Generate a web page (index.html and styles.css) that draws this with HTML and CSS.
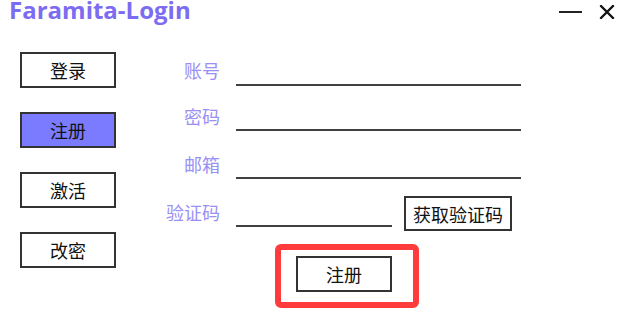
FILE: index.html
```html
<!DOCTYPE html>
<html lang="zh-CN">
<head>
<meta charset="utf-8">
<title>Faramita-Login</title>
<link rel="stylesheet" href="styles.css">
</head>
<body>
<div class="window">
  <header class="titlebar">
    <div class="title">Faramita-Login</div>
    <div class="controls">
      <svg class="ctl-min" width="23" height="4" viewBox="0 0 23 4"><line x1="0" y1="2" x2="23" y2="2" stroke="#222" stroke-width="2"/></svg>
      <svg class="ctl-close" width="16" height="14" viewBox="0 0 16 14"><path d="M2 1 L14 13 M14 1 L2 13" stroke="#111" stroke-width="2.4" stroke-linecap="round"/></svg>
    </div>
  </header>
  <main class="main">
    <nav class="sidebar">
      <button class="side-btn">登录</button>
      <button class="side-btn active">注册</button>
      <button class="side-btn">激活</button>
      <button class="side-btn">改密</button>
    </nav>
    <section class="form">
      <div class="rows">
        <div class="row r1"><label class="lbl">账号</label><div class="field"></div></div>
        <div class="row r2"><label class="lbl">密码</label><div class="field"></div></div>
        <div class="row r3"><label class="lbl">邮箱</label><div class="field"></div></div>
        <div class="row r4"><label class="lbl">验证码</label><div class="field short"></div><button class="code-btn">获取验证码</button></div>
      </div>
      <div class="highlight">
        <button class="submit-btn">注册</button>
      </div>
    </section>
  </main>
</div>
</body>
</html>
```
FILE: styles.css
```css
html, body {
  margin: 0;
  padding: 0;
  background: #ffffff;
}
body {
  font-family: "Noto Sans CJK SC", "Noto Sans", sans-serif;
  color: #111;
}
.window {
  width: 628px;
  height: 331px;
  overflow: hidden;
}
.titlebar {
  height: 40px;
  display: flex;
  justify-content: space-between;
  align-items: flex-start;
}
.title {
  font-family: "Open Sans", "Noto Sans", sans-serif;
  font-weight: 700;
  font-size: 24px;
  line-height: 20px;
  color: #7b6cf2;
  padding-left: 9px;
  padding-bottom: 6px;
}
.controls {
  display: flex;
  align-items: center;
  gap: 17px;
  padding-right: 13px;
  padding-top: 5px;
}
.ctl-min { display: block; }
.ctl-close { display: block; }
.main {
  display: flex;
  padding-top: 12px;
}
.sidebar {
  display: flex;
  flex-direction: column;
  gap: 24px;
  padding-left: 20px;
  width: 96px;
}
.side-btn {
  width: 96px;
  height: 36px;
  box-sizing: border-box;
  border: 2px solid #333;
  background: #fff;
  font-family: "Noto Sans CJK SC", sans-serif;
  font-size: 18px;
  line-height: 20px;
  color: #111;
  padding: 0;
  margin: 0;
}
.side-btn.active {
  background: #7b7bff;
}
.form {
  margin-left: 44px;
  display: flex;
  flex-direction: column;
}
.rows {
  display: grid;
  grid-template-rows: 34px 45px 48px 48px;
}
.row {
  display: flex;
  align-items: flex-end;
}
.lbl {
  width: 60px;
  text-align: right;
  font-size: 18px;
  line-height: 18px;
  color: #9a90f5;
  padding-bottom: 6px;
  margin-right: 16px;
}
.r1 .lbl { padding-bottom: 7px; }
.field {
  width: 285px;
  height: 0;
  border-bottom: 2px solid #404040;
}
.field.short {
  width: 156px;
}
.code-btn {
  margin-left: 12px;
  margin-bottom: -4px;
  width: 108px;
  height: 35px;
  box-sizing: border-box;
  border: 2px solid #333;
  background: #fff;
  font-family: "Noto Sans CJK SC", sans-serif;
  font-size: 18px;
  line-height: 20px;
  color: #111;
  padding: 0;
}
.highlight {
  margin-top: 17px;
  margin-left: 115px;
  width: 144px;
  height: 64px;
  box-sizing: border-box;
  border: 6px solid #ff3b3b;
  border-radius: 6px;
  padding: 6px 0 0 15px;
}
.submit-btn {
  display: block;
  width: 96px;
  height: 36px;
  box-sizing: border-box;
  border: 2px solid #333;
  background: #fff;
  font-family: "Noto Sans CJK SC", sans-serif;
  font-size: 18px;
  line-height: 20px;
  color: #111;
  padding: 0;
}
```
